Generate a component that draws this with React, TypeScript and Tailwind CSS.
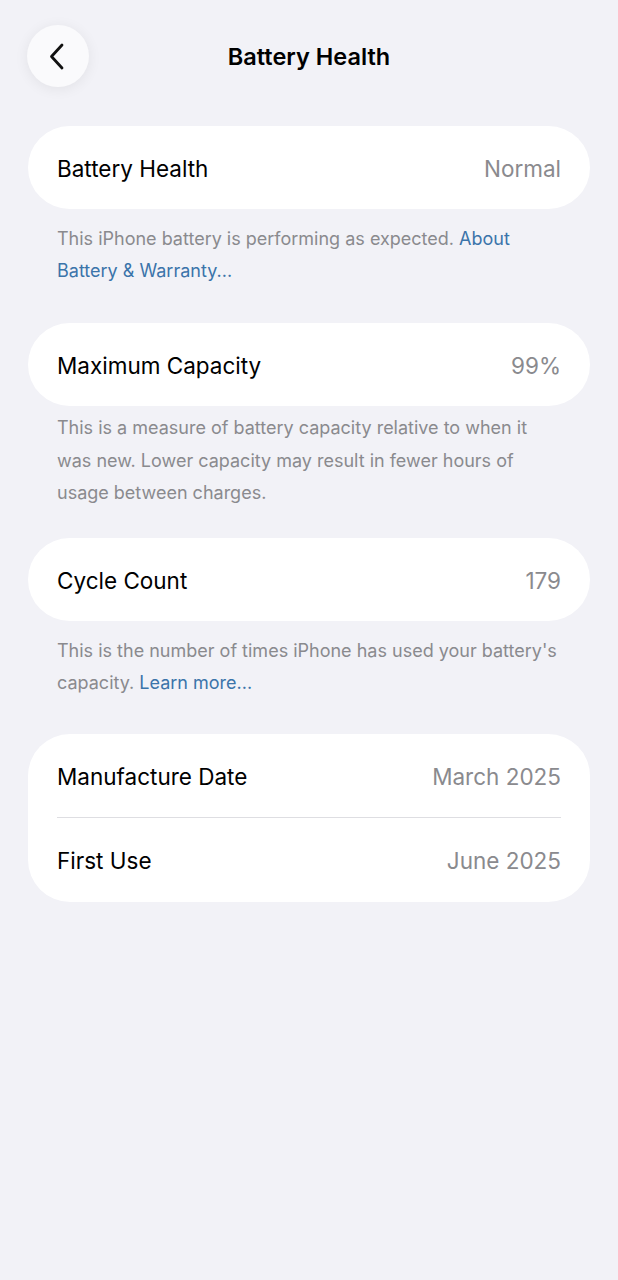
import React from 'react';

const font = { fontFamily: 'Inter, "Noto Sans", sans-serif' };

function Row({ label, value, h = 'h-[83px]' }: { label: string; value: string; h?: string }) {
  return (
    <div className={`flex items-center justify-between ${h} px-[29px] pt-[3px]`}>
      <span className="text-[22.5px] text-black">{label}</span>
      <span className="text-[22.5px] text-[#8a8a8e]">{value}</span>
    </div>
  );
}

function Card({ children }: { children: React.ReactNode }) {
  return <div className="mx-[28px] bg-white rounded-[42px] overflow-hidden">{children}</div>;
}

export default function App() {
  return (
    <div className="min-h-[1280px] w-full bg-[#f2f2f7]" style={font}>
      {/* nav bar */}
      <header className="relative h-[126px] flex items-start justify-center">
        <button className="absolute left-[27px] top-[25px] w-[62px] h-[62px] rounded-full bg-[#fafafc] shadow-[0_2px_14px_rgba(0,0,0,0.07)] flex items-center justify-center">
          <svg width="16" height="27" viewBox="0 0 16 27" fill="none" className="-ml-[2px]">
            <path d="M13 2L2.5 13.5L13 25" stroke="#111" strokeWidth="2.8" strokeLinecap="round" strokeLinejoin="round" />
          </svg>
        </button>
        <h1 className="mt-[39px] text-[23.5px] font-semibold text-black">Battery Health</h1>
      </header>

      <Card>
        <Row label="Battery Health" value="Normal" />
      </Card>
      <p className="mx-[57px] mt-[14px] mb-[36px] text-[18px] leading-[32px] text-[#8a8a8e]">
        This iPhone battery is performing as expected. <span className="text-[#3b74aa]">About Battery &amp; Warranty...</span>
      </p>

      <Card>
        <Row label="Maximum Capacity" value="99%" />
      </Card>
      <p className="ml-[57px] mr-[60px] mt-[6px] mb-[28px] text-[18px] leading-[32.5px] text-[#8a8a8e]">
        This is a measure of battery capacity relative to when it was new. Lower capacity may result in fewer hours of usage between charges.
      </p>

      <Card>
        <Row label="Cycle Count" value="179" />
      </Card>
      <p className="ml-[57px] mr-[50px] mt-[14px] mb-[35px] text-[18px] leading-[32px] text-[#8a8a8e]">
        This is the number of times iPhone has used your battery's capacity. <span className="text-[#3b74aa]">Learn more...</span>
      </p>

      <Card>
        <Row label="Manufacture Date" value="March 2025" />
        <div className="mx-[29px] h-px bg-[#dedee2]" />
        <Row label="First Use" value="June 2025" h="h-[84px]" />
      </Card>
    </div>
  );
}
